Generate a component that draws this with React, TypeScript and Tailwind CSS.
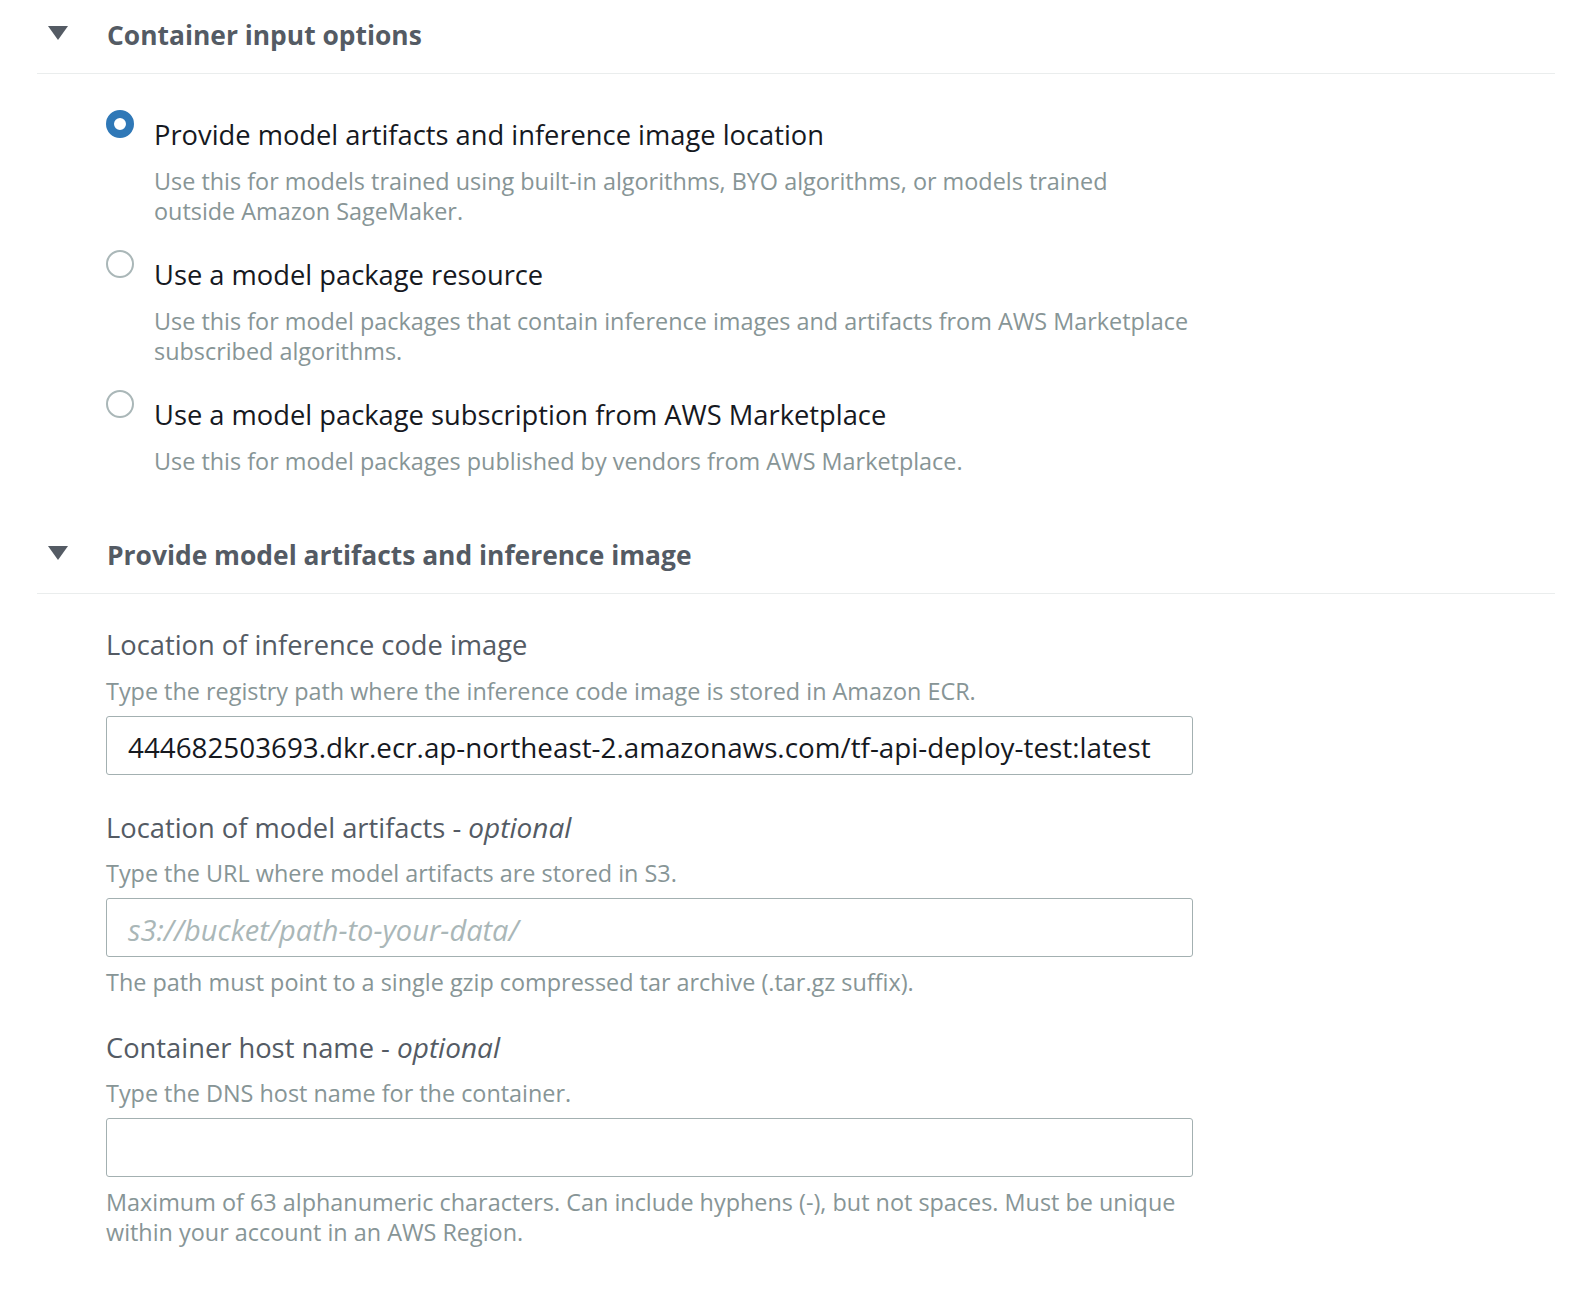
import { useState } from "react";

const options = [
  {
    id: "artifacts",
    label: "Provide model artifacts and inference image location",
    desc: ["Use this for models trained using built-in algorithms, BYO algorithms, or models trained", "outside Amazon SageMaker."],
  },
  {
    id: "package",
    label: "Use a model package resource",
    desc: ["Use this for model packages that contain inference images and artifacts from AWS Marketplace", "subscribed algorithms."],
  },
  {
    id: "subscription",
    label: "Use a model package subscription from AWS Marketplace",
    desc: ["Use this for model packages published by vendors from AWS Marketplace."],
  },
];

function SectionHeader({ title }: { title: string }) {
  return (
    <div className="h-[74px] flex items-center pb-[3px] border-b border-[#eaeded]">
      <svg width="20" height="14" viewBox="0 0 20 14" className="ml-[11px] mt-[-4px]">
        <path d="M0 0 H20 L10 14 Z" fill="#545b64" />
      </svg>
      <h2 className="ml-[39px] text-[26.4px] font-bold text-[#545b64] leading-[36px]">{title}</h2>
    </div>
  );
}

function Radio({ checked }: { checked: boolean }) {
  return checked ? (
    <div className="w-[28px] h-[28px] rounded-full border-[8px] border-[#2f78b7] bg-white flex-shrink-0" />
  ) : (
    <div className="w-[28px] h-[28px] rounded-full border-2 border-[#aab7b8] bg-white flex-shrink-0" />
  );
}

function Field({
  label,
  optional,
  desc,
  value,
  placeholder,
  hint,
}: {
  label: string;
  optional?: boolean;
  desc: string;
  value?: string;
  placeholder?: string;
  hint?: string[];
}) {
  return (
    <div>
      <div className="h-[36px] text-[27.3px] leading-[36px] text-[#545b64] whitespace-nowrap">
        {label}
        {optional && (
          <>
            {" - "}
            <i className="text-[28px] leading-[36px]">optional</i>
          </>
        )}
      </div>
      <div className="mt-[13px] text-[23.4px] leading-[30px] text-[#879596]">{desc}</div>
      <div className="mt-[10px] w-[1087px] h-[59px] border border-[#a3b0b1] rounded-[3px] flex items-center pl-[21px] pt-[4px]">
        {value ? (
          <span className="text-[27.8px] text-[#16191f]">{value}</span>
        ) : placeholder ? (
          <span className="text-[29px] italic text-[#aab7b8]">{placeholder}</span>
        ) : null}
      </div>
      {hint && (
        <div className="mt-[10px] text-[23.4px] leading-[30px] text-[#879596]">
          {hint.map((h, i) => (
            <div key={i}>{h}</div>
          ))}
        </div>
      )}
    </div>
  );
}

export default function App() {
  const [selected, setSelected] = useState("artifacts");

  return (
    <div className="min-h-[1291px] bg-white pl-[37px] pr-[36px]" style={{ fontFamily: "'Open Sans', 'Noto Sans', sans-serif" }}>
      <SectionHeader title="Container input options" />

      {/* Radio options */}
      <div className="pl-[69px] pt-[36px] flex flex-col gap-[24px]">
        {options.map(opt => (
          <div key={opt.id} className="flex items-start cursor-pointer" onClick={() => setSelected(opt.id)}>
            <Radio checked={selected === opt.id} />
            <div className="ml-[20px] pt-[7px]">
              <div className="text-[27.3px] leading-[36px] text-[#16191f]">{opt.label}</div>
              <div className="mt-[13px] text-[23.4px] leading-[30px] text-[#879596]">
                {opt.desc.map((d, i) => (
                  <div key={i}>{d}</div>
                ))}
              </div>
            </div>
          </div>
        ))}
      </div>

      <div className="mt-[44px]">
        <SectionHeader title="Provide model artifacts and inference image" />
      </div>

      <div className="pl-[69px] pt-[33px] flex flex-col">
        <Field
          label="Location of inference code image"
          desc="Type the registry path where the inference code image is stored in Amazon ECR."
          value="444682503693.dkr.ecr.ap-northeast-2.amazonaws.com/tf-api-deploy-test:latest"
        />
        <div className="mt-[34px]">
          <Field
            label="Location of model artifacts"
            optional
            desc="Type the URL where model artifacts are stored in S3."
            placeholder="s3://bucket/path-to-your-data/"
            hint={["The path must point to a single gzip compressed tar archive (.tar.gz suffix)."]}
          />
        </div>
        <div className="mt-[32px]">
          <Field
            label="Container host name"
            optional
            desc="Type the DNS host name for the container."
            hint={[
              "Maximum of 63 alphanumeric characters. Can include hyphens (-), but not spaces. Must be unique",
              "within your account in an AWS Region.",
            ]}
          />
        </div>
      </div>
    </div>
  );
}
